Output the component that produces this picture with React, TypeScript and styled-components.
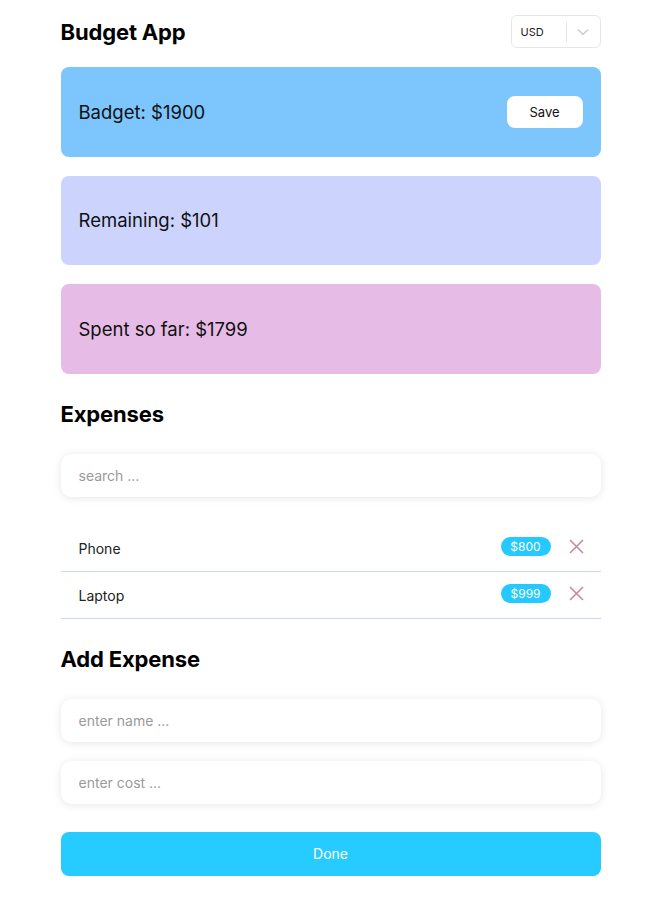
import React from "react";
import styled, { createGlobalStyle } from "styled-components";

const Global = createGlobalStyle`
  html, body { margin: 0; padding: 0; background: #fff; }
  body { font-family: Inter, "Noto Sans", sans-serif; color: #111; }
  * { box-sizing: border-box; }
`;

const Page = styled.div`
  width: 540px;
  margin: 0 auto;
  padding-top: 15px;
  display: flex;
  flex-direction: column;
`;

const Header = styled.div`
  display: flex;
  align-items: center;
  justify-content: space-between;
  height: 33px;
`;

const Title = styled.h1`
  margin: 0;
  font-size: 22px;
  font-weight: 700;
  letter-spacing: -0.15px;
  color: #000;
`;

const Select = styled.div`
  width: 90px;
  height: 33px;
  border: 1px solid #e6e6e6;
  border-radius: 6px;
  display: flex;
  align-items: center;
  padding-left: 9px;
  font-size: 11px;
  color: #222;
`;

const SelectValue = styled.span`
  flex: 1;
`;

const Sep = styled.span`
  width: 1px;
  height: 20px;
  background: #e6e6e6;
`;

const Chevron = styled.span`
  width: 33px;
  display: flex;
  align-items: center;
  justify-content: center;
  color: #cccccc;
`;

const Card = styled.div<{ $bg: string }>`
  margin-top: 19px;
  height: 89.5px;
  border-radius: 8px;
  background: ${(p) => p.$bg};
  display: flex;
  align-items: center;
  justify-content: space-between;
  padding: 0 18px;
  font-size: 18.5px;
  color: #111;
`;

const SaveButton = styled.button`
  width: 76px;
  height: 32px;
  border: none;
  border-radius: 8px;
  background: #fff;
  font-family: Inter, sans-serif;
  font-size: 13px;
  color: #111;
`;

const SectionTitle = styled.h2<{ $mt: number }>`
  margin: ${(p) => p.$mt}px 0 0;
  height: 30px;
  line-height: 30px;
  font-size: 22px;
  font-weight: 700;
  letter-spacing: -0.15px;
  color: #000;
`;

const Input = styled.input<{ $mt: number }>`
  margin-top: ${(p) => p.$mt}px;
  height: 43px;
  width: 100%;
  border: none;
  border-radius: 10px;
  background: #fff;
  box-shadow: 0 1px 8px rgba(0, 0, 0, 0.1);
  padding: 0 18px;
  font-family: Inter, sans-serif;
  font-size: 14px;
  outline: none;
  &::placeholder { color: #9a9a9a; }
`;

const List = styled.ul`
  list-style: none;
  margin: 28px 0 0;
  padding: 0;
`;

const Row = styled.li`
  height: 47px;
  display: flex;
  align-items: center;
  padding: 0 17px 0 18px;
  border-bottom: 1px solid #ccd4fe;
  font-size: 14px;
  color: #222;
`;

const RowName = styled.span`
  flex: 1;
  padding-top: 1px;
`;

const Badge = styled.span`
  width: 50px;
  height: 19px;
  border-radius: 10px;
  background: #26c9ff;
  color: #fff;
  font-size: 12px;
  display: flex;
  align-items: center;
  justify-content: center;
  margin-top: -3px;
`;

const Remove = styled.span`
  margin-left: 18px;
  width: 15px;
  height: 15px;
  display: flex;
  margin-top: -3px;
`;

const DoneButton = styled.button`
  margin-top: 28px;
  height: 44px;
  border: none;
  border-radius: 8px;
  background: #26cbff;
  color: #fff;
  font-family: Inter, sans-serif;
  font-size: 14px;
`;

const X = () => (
  <svg width="15" height="15" viewBox="0 0 15 15">
    <path d="M1 1 L14 14 M14 1 L1 14" stroke="#c987a6" strokeWidth="1.6" fill="none" />
  </svg>
);

export default function App() {
  const expenses = [
    { name: "Phone", cost: 800 },
    { name: "Laptop", cost: 999 },
  ];
  return (
    <>
      <Global />
      <Page>
        <Header>
          <Title>Budget App</Title>
          <Select>
            <SelectValue>USD</SelectValue>
            <Sep />
            <Chevron>
              <svg width="12" height="8" viewBox="0 0 12 8">
                <path d="M1 1.5 L6 6.5 L11 1.5" stroke="#cccccc" strokeWidth="1.5" fill="none" />
              </svg>
            </Chevron>
          </Select>
        </Header>
        <Card $bg="#7cc5fd">
          <span>Badget: $1900</span>
          <SaveButton>Save</SaveButton>
        </Card>
        <Card $bg="#ccd4fe">
          <span>Remaining: $101</span>
        </Card>
        <Card $bg="#e6bbe5">
          <span>Spent so far: $1799</span>
        </Card>
        <SectionTitle $mt={25}>Expenses</SectionTitle>
        <Input $mt={25} placeholder="search ..." />
        <List>
          {expenses.map((e) => (
            <Row key={e.name}>
              <RowName>{e.name}</RowName>
              <Badge>${e.cost}</Badge>
              <Remove>
                <X />
              </Remove>
            </Row>
          ))}
        </List>
        <SectionTitle $mt={25}>Add Expense</SectionTitle>
        <Input $mt={25} placeholder="enter name ..." />
        <Input $mt={19} placeholder="enter cost ..." />
        <DoneButton>Done</DoneButton>
      </Page>
    </>
  );
}
